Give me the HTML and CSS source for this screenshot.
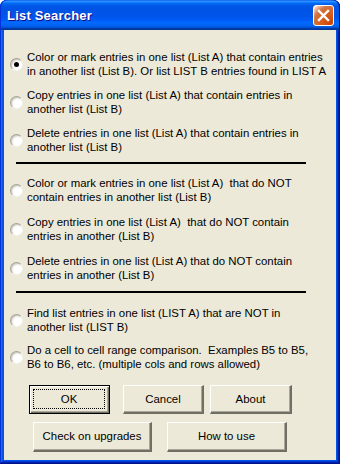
FILE: index.html
```html
<!DOCTYPE html>
<html>
<head>
<meta charset="utf-8">
<link rel="stylesheet" href="styles.css">
</head>
<body>
<div class="window">
  <div class="titlebar">
    <span class="title">List Searcher</span>
    <div class="close">
      <svg width="13" height="13" viewBox="0 0 13 13"><path d="M2 2 L11 11 M11 2 L2 11" stroke="#fff" stroke-width="2.4" stroke-linecap="square"/></svg>
    </div>
  </div>
  <div class="content">
    <div class="group g1">
      <div class="opt"><span class="radio checked"></span><span class="label">Color or mark entries in one list (List A) that contain entries<br>in another list (List B). Or list LIST B entries found in LIST A</span></div>
      <div class="opt"><span class="radio"></span><span class="label">Copy entries in one list (List A) that contain entries in<br>another list (List B)</span></div>
      <div class="opt"><span class="radio"></span><span class="label">Delete entries in one list (List A) that contain entries in<br>another list (List B)</span></div>
    </div>
    <div class="sep s1"></div>
    <div class="group g2">
      <div class="opt"><span class="radio"></span><span class="label">Color or mark entries in one list (List A)&nbsp; that do NOT<br>contain entries in another list (List B)</span></div>
      <div class="opt"><span class="radio"></span><span class="label">Copy entries in one list (List A)&nbsp; that do NOT contain<br>entries in another (List B)</span></div>
      <div class="opt"><span class="radio"></span><span class="label">Delete entries in one list (List A) that do NOT contain<br>entries in another (List B)</span></div>
    </div>
    <div class="sep s2"></div>
    <div class="group g3">
      <div class="opt"><span class="radio"></span><span class="label">Find list entries in one list (LIST A) that are NOT in<br>another list (LIST B)</span></div>
      <div class="opt"><span class="radio"></span><span class="label">Do a cell to cell range comparison.&nbsp; Examples B5 to B5,<br>B6 to B6, etc. (multiple cols and rows allowed)</span></div>
    </div>
    <div class="btnrow row1">
      <div class="btn default"><span class="focus">OK</span></div>
      <div class="btn b-cancel">Cancel</div>
      <div class="btn b-about">About</div>
    </div>
    <div class="btnrow row2">
      <div class="btn b-wide">Check on upgrades</div>
      <div class="btn b-wide">How to use</div>
    </div>
  </div>
</div>
</body>
</html>
```

FILE: styles.css
```css
* { box-sizing: border-box; }
html, body { margin: 0; padding: 0; background: #fff; }
body { width: 340px; height: 464px; overflow: hidden; }

.window {
  width: 340px;
  height: 464px;
  display: flex;
  flex-direction: column;
  background: #0054e3;
  border-radius: 7px 7px 0 0;
  padding: 0 4px 4px 4px;
  box-shadow: inset -1px -1px #00138c, inset 1px 1px #0831d9,
              inset -2px -2px #001ea0, inset 2px 2px #166aee,
              inset -3px -3px #003bda, inset 3px 3px #0855dd;
  font-family: "Liberation Sans", Arial, sans-serif;
}

.titlebar {
  height: 30px;
  margin: 0 -4px;
  padding: 0 6px 0 7px;
  display: flex;
  align-items: center;
  justify-content: space-between;
  border-radius: 7px 7px 0 0;
  background: linear-gradient(to bottom, #0058ee 0%, #3593ff 4%, #288eff 6%, #127dff 8%, #036ffc 10%, #0262ee 14%, #0057e5 20%, #0054e3 24%, #0055eb 56%, #005bf5 66%, #026afe 76%, #0062ef 86%, #0052d6 92%, #0040ab 94%, #003092 100%);
  box-shadow: inset 1px 0 #0831d9, inset -1px 0 #00138c;
}

.title {
  color: #fff;
  font-weight: bold;
  font-size: 13px;
  letter-spacing: 0.2px;
  text-shadow: 1px 1px #0f1089;
  padding-top: 1px;
}

.close {
  width: 21px;
  height: 21px;
  border: 1px solid #fff;
  border-radius: 3px;
  display: flex;
  align-items: center;
  justify-content: center;
  background: radial-gradient(circle at 90% 90%, #cc4600 0%, #dc6527 55%, #cd7546 70%, #ffccb2 90%, #ffffff 100%);
  margin-top: 1px;
}

.content {
  flex: 1;
  background: #ece9d8;
  padding: 20px 0 0 6px;
  display: flex;
  flex-direction: column;
  color: #000;
  font-size: 11.4px;
}

.group { display: flex; flex-direction: column; }
.g1 { gap: 10px; }
.g2 { gap: 11px; }
.g3 { gap: 9px; }

.opt {
  display: flex;
  align-items: center;
  height: 28px;
}

.label {
  line-height: 14px;
  white-space: nowrap;
  margin-left: 4px;
}

.radio {
  flex: none;
  width: 13px;
  height: 13px;
  border-radius: 50%;
  border: 1px solid;
  border-color: #a7a597 #f4f3ee #f4f3ee #a7a597;
  background: radial-gradient(circle at 62% 62%, #ffffff 0%, #ffffff 40%, #ecebe4 62%, #c8c5b8 100%);
  box-shadow: inset 1px 1px 0 #cfcdc2;
  position: relative;
  margin-top: 1px;
}
.radio.checked::after {
  content: "";
  position: absolute;
  left: 3px;
  top: 3px;
  width: 5px;
  height: 5px;
  border-radius: 50%;
  background: #000;
}

.sep {
  height: 2px;
  width: 290px;
  margin-left: 6px;
  background: #000;
}
.s1 { margin-top: 8px; margin-bottom: 12px; }
.s2 { margin-top: 9px; margin-bottom: 13px; }

.btnrow { display: flex; }
.row1 { margin-top: 14px; padding-left: 19px; gap: 6px; }
.row2 { margin-top: 8px; padding-left: 23px; gap: 15px; }

.btn {
  height: 29px;
  width: 81px;
  display: flex;
  align-items: center;
  justify-content: center;
  background: #ece9d8;
  border-style: solid;
  border-width: 1px 2px 2px 1px;
  border-color: #fff #716f64 #716f64 #fff;
  box-shadow: inset -1px -1px #aca899;
  font-size: 11.4px;
  padding-bottom: 1px;
}
.btn.default {
  border: 1px solid #000;
  box-shadow: inset 1px 1px #fff, inset -1px -1px #716f64, inset -2px -2px #aca899;
  padding: 3px 4px 4px 3px;
  margin-right: 7px;
}
.focus {
  flex: 1;
  align-self: stretch;
  display: flex;
  align-items: center;
  justify-content: center;
  border: 1px dotted #000;
}
.b-cancel { width: 81px; }
.b-about { width: 82px; }
.row2 .btn { height: 30px; }
.b-wide { width: 119px; }
.b-wide + .b-wide { width: 120px; }
```
